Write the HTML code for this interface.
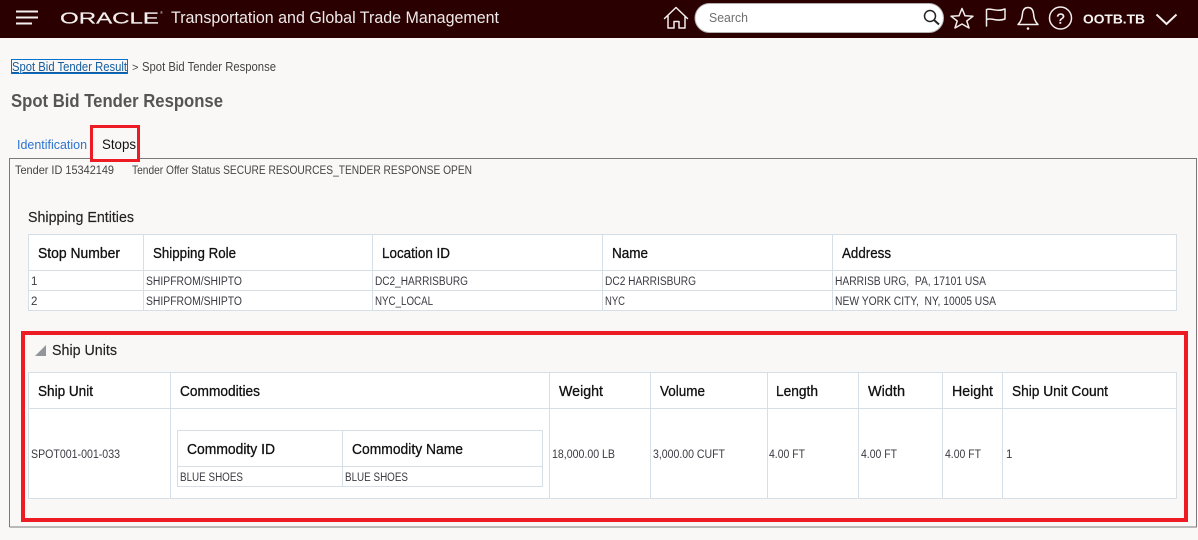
<!DOCTYPE html>
<html><head><meta charset="utf-8"><title>Spot Bid Tender Response</title>
<style>
html,body{margin:0;padding:0;width:1198px;height:540px;overflow:hidden;background:#faf8f7}
svg{display:block}
text{font-family:"Liberation Sans",sans-serif;white-space:pre}
.h{font-size:14.5px;fill:#111;stroke:#111;stroke-width:.3px}
.c{font-size:11.5px;fill:#3a3a42}
.line{fill:none;stroke:#d6dfe6;stroke-width:1}
.ic{fill:none;stroke:#f2eeee;stroke-width:1.5;stroke-linejoin:round;stroke-linecap:round}
</style></head><body>
<svg width="1198" height="540" viewBox="0 0 1198 540" xmlns="http://www.w3.org/2000/svg">
<rect width="1198" height="540" fill="#faf8f7"/>
<rect width="1198" height="38" fill="#2b0000"/>
<path d="M16 11.500H38M16 17.500H38M16 23.500H32" stroke="#f4f0f0" stroke-width="2" fill="none"/>
<text x="60" y="23.300" font-size="15.500" textLength="99" lengthAdjust="spacingAndGlyphs" fill="#f2eeee" stroke="#f2eeee" stroke-width=".2">ORACLE</text>
<text x="160" y="14" font-size="4" fill="#d8d4d4">®</text>
<text x="171" y="23" font-size="17" textLength="328" lengthAdjust="spacingAndGlyphs" fill="#eeeaea">Transportation and Global Trade Management</text>
<path class="ic" d="M664.500 18.500L676 7.500L687.500 18.500M668 16V28H674V21.500H679V28H685V16"/>
<rect x="695" y="3.500" width="248.500" height="29" rx="14.500" fill="#fff" stroke="#b5b0b0" stroke-width="1"/>
<text x="709" y="22" font-size="12.500" textLength="39" lengthAdjust="spacingAndGlyphs" fill="#6e6e6e">Search</text>
<circle cx="930" cy="16" r="5.500" fill="none" stroke="#222" stroke-width="1.500"/>
<path d="M934 20L939 24.500" stroke="#222" stroke-width="2" fill="none"/>
<path class="ic" d="M962 8.500L965 15.800L973 16.200L966.800 21L969 28L962 24L955 28L957.200 21L951 16.200L959 15.800Z"/>
<path class="ic" d="M986.500 26V9.500C991 7.500 996 12.500 1005 9V19C997 22 992 17.500 986.500 19.500" stroke-width="1.200"/>
<path class="ic" d="M1018 24.500H1038C1034.500 21 1034 18 1033.500 13.500C1033 9.500 1031 7.500 1028 7.500C1025 7.500 1023 9.500 1022.500 13.500C1022 18 1021.500 21 1018 24.500Z"/>
<circle cx="1028" cy="28.500" r="1.300" fill="#f2eeee"/>
<circle cx="1060.500" cy="18" r="11" class="ic"/>
<text x="1060.500" y="23.500" font-size="15" text-anchor="middle" stroke="#f2eeee" stroke-width=".4" fill="#f2eeee">?</text>
<text x="1083" y="23.500" font-size="13" font-weight="bold" textLength="62" lengthAdjust="spacingAndGlyphs" fill="#f7f4f4">OOTB.TB</text>
<path d="M1156.500 14.500L1166.500 24L1176.500 14.500" fill="none" stroke="#f2eeee" stroke-width="2"/>

<rect x="11.500" y="59.500" width="116" height="14" fill="none" stroke="#0572ce" stroke-width="1"/>
<text x="12" y="71" font-size="12.500" textLength="115" lengthAdjust="spacingAndGlyphs" fill="#145c9e" text-decoration="underline">Spot Bid Tender Result</text>
<text x="132" y="71" font-size="11" fill="#444">&gt;</text>
<text x="142" y="71" font-size="12.500" textLength="134" lengthAdjust="spacingAndGlyphs" fill="#444">Spot Bid Tender Response</text>
<text x="11" y="107" font-size="18.500" font-weight="bold" textLength="212" lengthAdjust="spacingAndGlyphs" fill="#555">Spot Bid Tender Response</text>

<text x="17" y="149" font-size="12.500" textLength="70" lengthAdjust="spacingAndGlyphs" fill="#2a74d0">Identification</text>
<path d="M9.500 527V158.500H91M139 158.500H1196.500V527H9.500" fill="none" stroke="#7a7a7a" stroke-width="1"/>
<rect x="91.500" y="126.500" width="47" height="34" fill="none" stroke="#ed1c24" stroke-width="3"/>
<text x="102" y="149" font-size="14" textLength="34" lengthAdjust="spacingAndGlyphs" fill="#111">Stops</text>

<text x="15" y="174" font-size="12" textLength="99" lengthAdjust="spacingAndGlyphs" fill="#444">Tender ID 15342149</text>
<text x="132" y="174" font-size="12" textLength="340" lengthAdjust="spacingAndGlyphs" fill="#444">Tender Offer Status SECURE RESOURCES_TENDER RESPONSE OPEN</text>
<text x="28" y="222" font-size="14.500" textLength="106" lengthAdjust="spacingAndGlyphs" fill="#222" stroke="#222" stroke-width=".15">Shipping Entities</text>

<rect x="28.500" y="234.500" width="1148" height="76" fill="#fff"/>
<path class="line" d="M28.500 234.500H1176.500V310.500H28.500ZM28.500 270.500H1176.500M28.500 290.500H1176.500M143.500 234.500V310.500M372.500 234.500V310.500M602.500 234.500V310.500M832.500 234.500V310.500"/>
<text class="h" x="38" y="258" textLength="82" lengthAdjust="spacingAndGlyphs">Stop Number</text>
<text class="h" x="153" y="258" textLength="83" lengthAdjust="spacingAndGlyphs">Shipping Role</text>
<text class="h" x="382" y="258" textLength="68" lengthAdjust="spacingAndGlyphs">Location ID</text>
<text class="h" x="612" y="258" textLength="36" lengthAdjust="spacingAndGlyphs">Name</text>
<text class="h" x="842" y="258" textLength="49" lengthAdjust="spacingAndGlyphs">Address</text>
<text class="c" x="31" y="285">1</text>
<text class="c" x="146" y="285" textLength="96" lengthAdjust="spacingAndGlyphs">SHIPFROM/SHIPTO</text>
<text class="c" x="375" y="285" textLength="93" lengthAdjust="spacingAndGlyphs">DC2_HARRISBURG</text>
<text class="c" x="605" y="285" textLength="91" lengthAdjust="spacingAndGlyphs">DC2 HARRISBURG</text>
<text class="c" x="835" y="285" textLength="151" lengthAdjust="spacingAndGlyphs">HARRISB URG,  PA, 17101 USA</text>
<text class="c" x="31" y="305">2</text>
<text class="c" x="146" y="305" textLength="96" lengthAdjust="spacingAndGlyphs">SHIPFROM/SHIPTO</text>
<text class="c" x="375" y="305" textLength="58" lengthAdjust="spacingAndGlyphs">NYC_LOCAL</text>
<text class="c" x="605" y="305" textLength="20" lengthAdjust="spacingAndGlyphs">NYC</text>
<text class="c" x="835" y="305" textLength="161" lengthAdjust="spacingAndGlyphs">NEW YORK CITY,  NY, 10005 USA</text>

<rect x="23" y="333" width="1163" height="187" fill="none" stroke="#ed1c24" stroke-width="4"/>
<path d="M46 345V356H35Z" fill="#92969a"/>
<text x="52" y="355" font-size="14.500" textLength="65" lengthAdjust="spacingAndGlyphs" fill="#222" stroke="#222" stroke-width=".15">Ship Units</text>

<rect x="28.500" y="372.500" width="1148" height="126" fill="#fff"/>
<path class="line" d="M28.500 372.500H1176.500V498.500H28.500ZM28.500 408.500H1176.500M170.500 372.500V498.500M549.500 372.500V498.500M650.500 372.500V498.500M767.500 372.500V498.500M858.500 372.500V498.500M942.500 372.500V498.500M1002.500 372.500V498.500"/>
<text class="h" x="38" y="396" textLength="55" lengthAdjust="spacingAndGlyphs">Ship Unit</text>
<text class="h" x="180" y="396" textLength="80" lengthAdjust="spacingAndGlyphs">Commodities</text>
<text class="h" x="559" y="396" textLength="44" lengthAdjust="spacingAndGlyphs">Weight</text>
<text class="h" x="660" y="396" textLength="45" lengthAdjust="spacingAndGlyphs">Volume</text>
<text class="h" x="776" y="396" textLength="42" lengthAdjust="spacingAndGlyphs">Length</text>
<text class="h" x="868" y="396" textLength="37" lengthAdjust="spacingAndGlyphs">Width</text>
<text class="h" x="952" y="396" textLength="41" lengthAdjust="spacingAndGlyphs">Height</text>
<text class="h" x="1012" y="396" textLength="96" lengthAdjust="spacingAndGlyphs">Ship Unit Count</text>
<text class="c" x="31" y="458" textLength="89" lengthAdjust="spacingAndGlyphs">SPOT001-001-033</text>
<text class="c" x="552" y="458" textLength="63" lengthAdjust="spacingAndGlyphs">18,000.00 LB</text>
<text class="c" x="653" y="458" textLength="72" lengthAdjust="spacingAndGlyphs">3,000.00 CUFT</text>
<text class="c" x="769" y="458" textLength="36" lengthAdjust="spacingAndGlyphs">4.00 FT</text>
<text class="c" x="861" y="458" textLength="36" lengthAdjust="spacingAndGlyphs">4.00 FT</text>
<text class="c" x="945" y="458" textLength="36" lengthAdjust="spacingAndGlyphs">4.00 FT</text>
<text class="c" x="1006" y="458">1</text>

<path class="line" d="M177.500 430.500H542.500V486.500H177.500ZM177.500 466.500H542.500M342.500 430.500V486.500"/>
<text class="h" x="187" y="454" textLength="88" lengthAdjust="spacingAndGlyphs">Commodity ID</text>
<text class="h" x="352" y="454" textLength="111" lengthAdjust="spacingAndGlyphs">Commodity Name</text>
<text class="c" x="180" y="481" textLength="63" lengthAdjust="spacingAndGlyphs">BLUE SHOES</text>
<text class="c" x="345" y="481" textLength="63" lengthAdjust="spacingAndGlyphs">BLUE SHOES</text>
</svg>
</body></html>
